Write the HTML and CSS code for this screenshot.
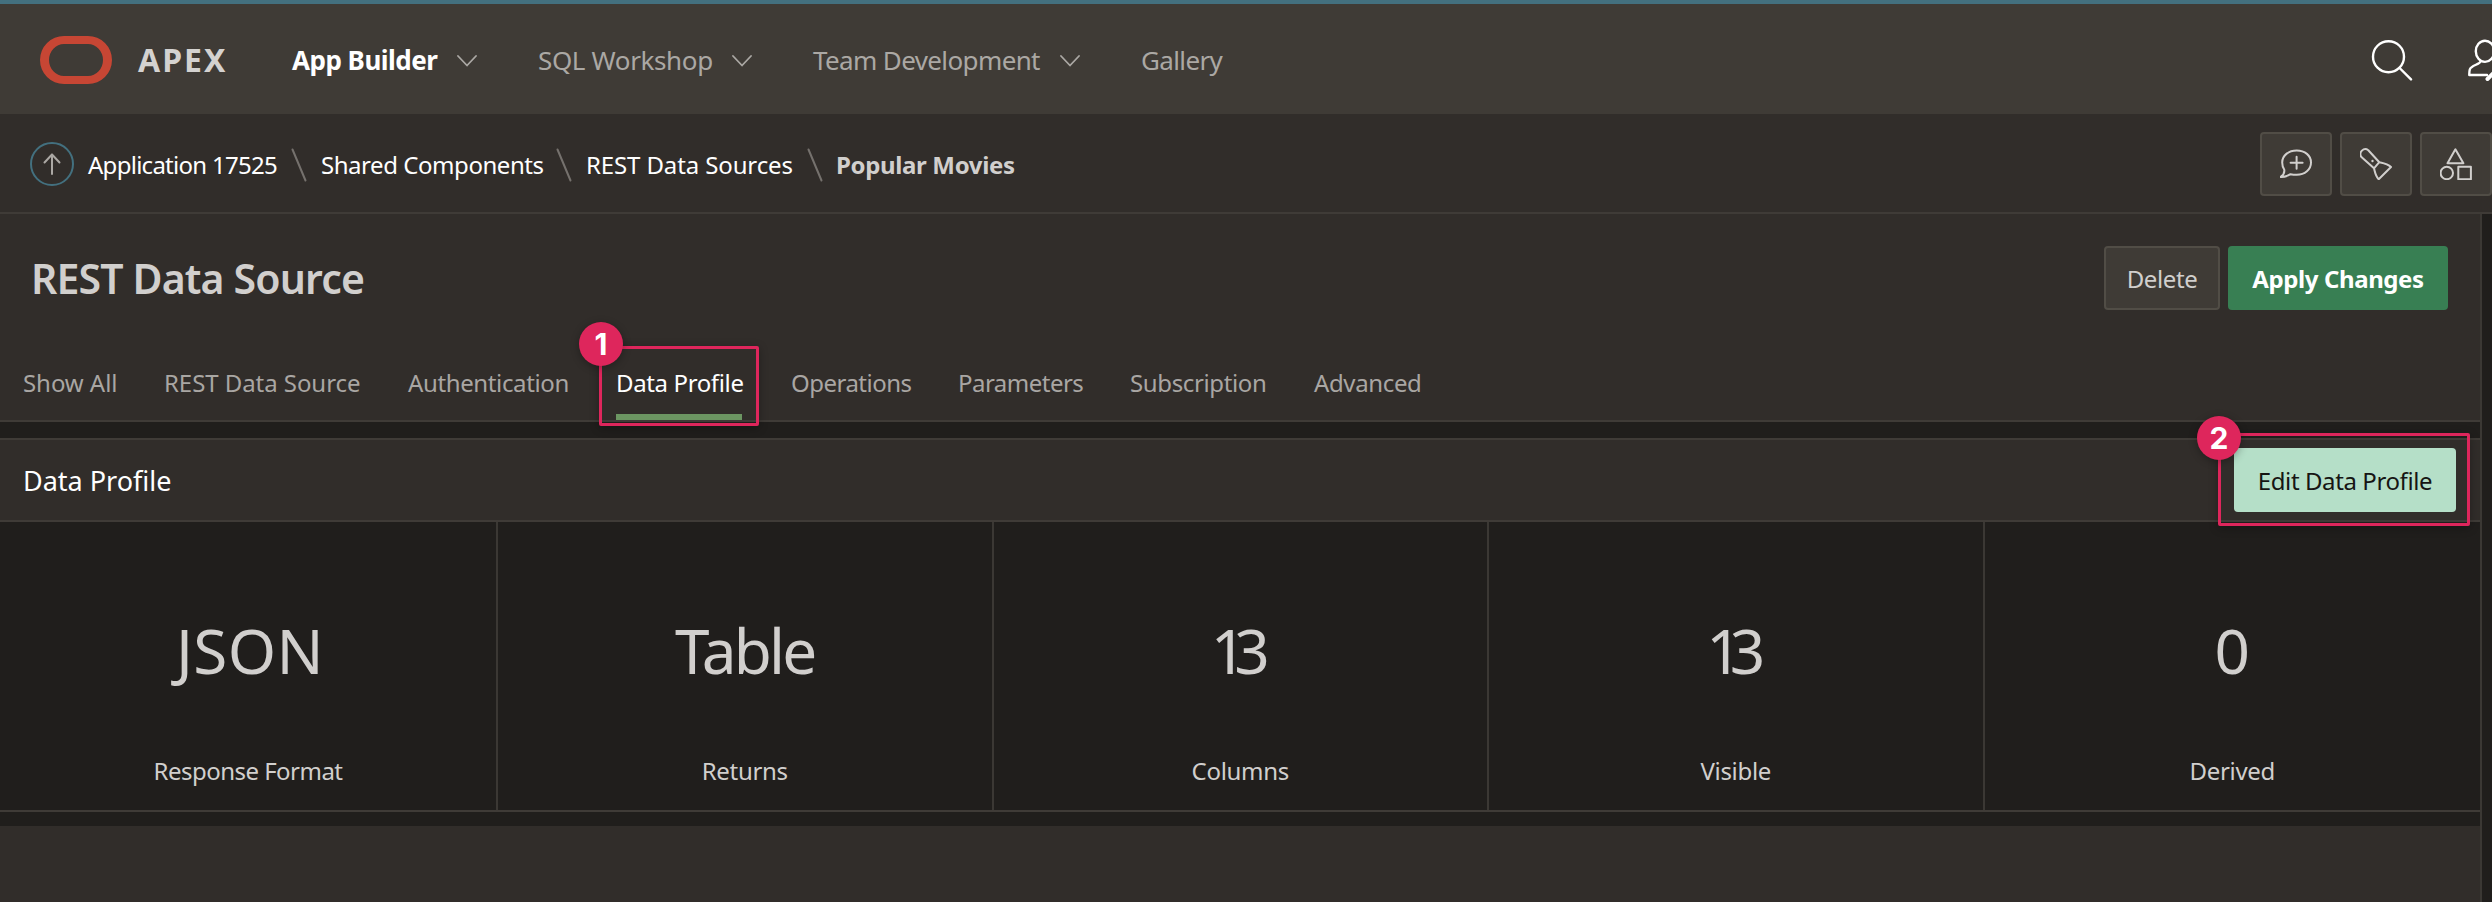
FILE: index.html
```html
<!DOCTYPE html>
<html lang="en">
<head>
<meta charset="utf-8">
<title>REST Data Source</title>
<link rel="stylesheet" href="styles.css">
</head>
<body>
<header class="topbar">
  <div class="logo"></div>
  <div class="brand">APEX</div>
  <nav class="menu">
    <a class="menu-item active">App Builder</a>
    <svg class="chevron" viewBox="0 0 20 12"><path d="M1 1l9 9.5L19 1"/></svg>
    <a class="menu-item sql">SQL Workshop</a>
    <svg class="chevron" viewBox="0 0 20 12"><path d="M1 1l9 9.5L19 1"/></svg>
    <a class="menu-item team">Team Development</a>
    <svg class="chevron" viewBox="0 0 20 12"><path d="M1 1l9 9.5L19 1"/></svg>
    <a class="menu-item gallery">Gallery</a>
  </nav>
  <div class="top-icons">
    <svg class="search-icon" viewBox="0 0 42 42"><circle cx="17.5" cy="17.7" r="15.5"/><path d="M28.6 29L40 40.4"/></svg>
    <svg class="user-icon" viewBox="0 0 24 42"><ellipse cx="17" cy="12.3" rx="9.2" ry="10.6"/><path d="M12.5 22.3c0 3-9.5 4-10.7 8.2-.6 2-.5 3-.5 5.500H19"/><path class="pencil" d="M19.500 40l6-6"/></svg>
  </div>
</header>

<div class="crumbbar">
  <svg class="up-icon" viewBox="0 0 44 44"><circle cx="22" cy="22" r="21"/><path d="M22 32V12.500M14.500 20.500L22 12.500l7.500 8"/></svg>
  <nav class="crumbs">
    <a class="crumb app">Application 17525</a>
    <svg class="slash" viewBox="0 0 16 34"><path d="M1.500 1.500l13 31"/></svg>
    <a class="crumb shared">Shared Components</a>
    <svg class="slash" viewBox="0 0 16 34"><path d="M1.500 1.500l13 31"/></svg>
    <a class="crumb sources">REST Data Sources</a>
    <svg class="slash" viewBox="0 0 16 34"><path d="M1.500 1.500l13 31"/></svg>
    <span class="crumb current">Popular Movies</span>
  </nav>
  <div class="tools">
    <button class="tool"><svg viewBox="0 0 32 32"><path d="M10.500 26.200C7 28.500 4 29 .7 28.900 3.500 27 4.600 24.500 4.300 21.800 2.800 19.600 2.200 17 2.200 14.500 2.200 7.500 8.500 2.500 16.700 2.500S31 7.500 31 14.500 24.900 26.800 16.700 26.800c-2.300 0-4.300-.2-6.200-.6zM16.600 8.700v12M10.600 14.700h12"/></svg></button>
    <button class="tool"><svg viewBox="0 0 32 32"><path d="M19.300 14.200L8.300 2.200A4.900 4.900 0 0 0 1.400 9L14 20.300zM19.300 14.200c3.700.8 8.200 1.400 11.700 4.800L18.700 31.300C15.500 28 15 24 14 20.300"/><circle class="dot" cx="12.500" cy="13" r="1.200"/></svg></button>
    <button class="tool"><svg viewBox="0 0 32 32"><path d="M15.400 1.300L7.500 15.200h15.900z"/><circle cx="6.800" cy="25" r="6.200"/><path d="M18.300 18.700h12.600v12.600H18.300z"/></svg></button>
  </div>
</div>

<main class="page">
  <div class="content">
    <section class="head">
      <div class="title-row">
        <h1 class="title">REST Data Source</h1>
        <div class="actions">
          <button class="btn delete">Delete</button>
          <button class="btn apply">Apply Changes</button>
        </div>
      </div>
      <nav class="tabs">
        <a class="tab flat">Show All</a>
        <a class="tab flat">REST Data Source</a>
        <a class="tab">Authentication</a>
        <a class="tab selected">Data Profile
          <span class="callout callout-tab"></span><span class="badge badge-tab">1</span>
        </a>
        <a class="tab tight">Operations</a>
        <a class="tab tight">Parameters</a>
        <a class="tab">Subscription</a>
        <a class="tab">Advanced</a>
      </nav>
    </section>

    <section class="region">
      <div class="region-head">
        <h2 class="region-title">Data Profile</h2>
        <div class="edit-wrap">
          <button class="btn edit">Edit Data Profile</button>
          <span class="callout callout-edit"></span><span class="badge badge-edit">2</span>
        </div>
      </div>
      <div class="cards">
        <div class="card"><div class="value json">JSON</div><div class="label tight">Response Format</div></div>
        <div class="card"><div class="value table">Table</div><div class="label">Returns</div></div>
        <div class="card"><div class="value num">13</div><div class="label">Columns</div></div>
        <div class="card"><div class="value num">13</div><div class="label">Visible</div></div>
        <div class="card"><div class="value">0</div><div class="label">Derived</div></div>
      </div>
    </section>
    <section class="next-region"></section>
  </div>
</main>
</body>
</html>
```
FILE: styles.css
```css
* { box-sizing: border-box; }

body {
  margin: 0;
  width: 2492px;
  height: 902px;
  overflow: hidden;
  display: flex;
  flex-direction: column;
  background: #201e1c;
  color: #d1cfcd;
  font-family: "Noto Sans", "Open Sans", sans-serif;
  font-size: 24px;
  white-space: nowrap;
}

svg { fill: none; stroke-linecap: round; stroke-linejoin: round; flex: none; }
h1, h2 { margin: 0; }
button { font: inherit; letter-spacing: inherit; margin: 0; padding: 0; }

/* Top bar */
.topbar {
  flex: none;
  height: 114px;
  border-top: 4px solid #43707f;
  background: #3f3b36;
  display: flex;
  align-items: center;
  padding-left: 40px;
}
.logo {
  width: 72px;
  height: 48px;
  margin-top: 2px;
  border: 8px solid #c74634;
  border-width: 8px 9px;
  border-radius: 24px;
}
.brand {
  width: 154px;
  margin-left: 26px;
  padding-top: 1px;
  font-size: 32px;
  font-weight: 700;
  letter-spacing: 2px;
  color: #d4d2d0;
}
.menu {
  display: grid;
  grid-template-columns: 165px 81px 194px 81px 247px 81px 100px;
  align-items: center;
  font-size: 26px;
  color: #aba8a4;
  padding-top: 1px;
}
.menu-item { letter-spacing: -.5px; }
.menu-item.active { color: #fff; font-weight: 700; }
.menu-item.sql { letter-spacing: -.37px; }
.menu-item.team, .menu-item.gallery { letter-spacing: -.62px; }
.chevron { width: 20px; height: 12px; margin-top: 3px; stroke: #aba8a4; stroke-width: 1.8; }
.top-icons { margin-left: auto; display: flex; align-items: center; gap: 55px; }
.search-icon { width: 42px; height: 42px; margin-top: 2px; stroke: #fff; stroke-width: 2.4; }
.user-icon { width: 24px; height: 42px; margin-top: 2px; stroke: #fff; stroke-width: 2.4; }
.pencil { stroke-width: 4; }

/* Breadcrumb bar */
.crumbbar {
  flex: none;
  height: 100px;
  border-bottom: 2px solid #3f3b37;
  background: #312d2a;
  display: flex;
  align-items: center;
  padding-left: 30px;
}
.up-icon { width: 44px; height: 44px; margin-top: 2px; stroke: #aba8a4; stroke-width: 2; }
.up-icon circle { stroke: #43707f; }
.crumbs {
  margin: 3px 0 0 14px;
  display: grid;
  grid-template-columns: 203px 30px 235px 30px 221px 29px 190px;
  align-items: center;
  color: #fff;
}
.crumb.app { letter-spacing: -.73px; }
.crumb.shared { letter-spacing: -.45px; }
.crumb.sources { letter-spacing: -.12px; }
.crumb.current { letter-spacing: -.35px; font-weight: 700; color: #d1cfcd; }
.slash { width: 16px; height: 34px; stroke: #75716d; stroke-width: 2; }
.tools { margin-left: auto; display: flex; gap: 8px; margin-top: 2px; }
.tool {
  width: 72px;
  height: 64px;
  border: 2px solid #514d46;
  border-radius: 4px;
  background: #3f3b36;
  display: grid;
  place-items: center;
}
.tool svg { width: 32px; height: 32px; stroke: #d1cfcd; stroke-width: 2; }
.tool .dot { fill: #d1cfcd; stroke: none; }

/* Page content */
.page { flex: 1; display: flex; min-height: 0; }
.content {
  width: 2482px;
  border-right: 2px solid #3b3834;
  display: flex;
  flex-direction: column;
}
.head {
  height: 208px;
  background: #312d2a;
  border-bottom: 2px solid #3f3b37;
}
.title-row {
  height: 128px;
  display: flex;
  align-items: center;
  justify-content: space-between;
  padding: 0 32px 0 31px;
}
.title { font-size: 41px; line-height: 64px; font-weight: 600; letter-spacing: -.85px; }
.actions { display: flex; gap: 8px; }
.btn {
  height: 64px;
  border: 0;
  border-radius: 4px;
  letter-spacing: -.4px;
  text-align: center;
}
.btn.delete { width: 116px; background: #3f3b36; border: 2px solid #514d46; color: #d1cfcd; }
.btn.apply { width: 220px; background: #387f53; color: #fff; font-weight: 700; }
.btn.edit { width: 222px; background: #b5dfc8; color: #161513; }

.tabs {
  margin-top: 4px;
  padding-left: 23px;
  display: grid;
  grid-template-columns: 141px 244px 208px 175px 167px 172px 184px 120px;
  justify-items: start;
  color: #a9a6a3;
}
.tab { position: relative; height: 74px; line-height: 74px; letter-spacing: -.37px; }
.tab.flat { letter-spacing: -.06px; }
.tab.tight, .label.tight { letter-spacing: -.52px; }
.tab.selected { width: 126px; color: #fff; border-bottom: 6px solid #6c9662; }

/* Numbered callouts */
.callout {
  position: absolute;
  border: 3px solid #de265c;
  border-radius: 2px;
  box-shadow: 0 2px 10px rgba(0, 0, 0, .3);
}
.callout-tab { inset: 0 -17px -12px -17px; }
.callout-edit { inset: -15px -14px -14px -16px; }
.badge {
  position: absolute;
  width: 44px;
  height: 44px;
  border-radius: 50%;
  background: #de265c;
  box-shadow: 0 2px 8px rgba(0, 0, 0, .3);
  color: #fff;
  font: 700 30px/44px Inter, sans-serif;
  letter-spacing: 0;
  text-align: center;
}
.badge-tab { left: -37px; top: -24px; }
.badge-edit { left: -37px; top: -32px; }

/* Data profile region */
.region {
  height: 374px;
  margin-top: 16px;
  border: solid #3f3b37;
  border-width: 2px 0;
}
.region-head {
  height: 82px;
  border-bottom: 2px solid #3f3b37;
  background: #312d2a;
  display: flex;
  align-items: center;
  justify-content: space-between;
  padding: 0 24px 0 23px;
}
.region-title { font-size: 27px; font-weight: 400; color: #fff; }
.edit-wrap { position: relative; display: flex; }
.cards { display: grid; grid-template-columns: 498px repeat(4, 1fr); height: 288px; }
.card {
  display: flex;
  flex-direction: column;
  align-items: center;
  padding-top: 88px;
  border-right: 2px solid #3b3834;
}
.card:last-child { border-right: 0; }
.value { font-size: 62px; line-height: 80px; }
.value.json { letter-spacing: .4px; padding-left: 4px; }
.value.table { letter-spacing: -2.8px; }
.value.num { letter-spacing: -12px; padding-right: 12px; }
.label { margin-top: 64px; line-height: 34px; letter-spacing: -.3px; }
.next-region { flex: 1; margin-top: 14px; background: #312d2a; }
```
